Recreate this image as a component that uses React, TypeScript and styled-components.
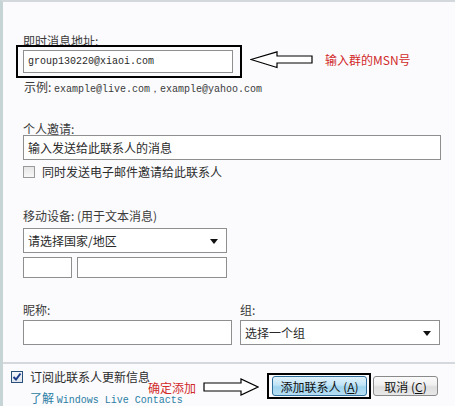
import styled, { createGlobalStyle } from 'styled-components';

const GlobalStyle = createGlobalStyle`
  html, body {
    margin: 0;
    padding: 0;
    background: #fbfbfd;
  }
  body {
    font-family: "Noto Sans CJK SC", "Noto Sans", sans-serif;
    font-size: 12px;
    color: #333;
  }
`;

export default function App() {
  return (
    <>
      <GlobalStyle />
      <Frame>
        <Form>
          <Label>即时消息地址:</Label>
          <TopRow>
            <Highlight>
              <TextBox width={210} height={23}>
                <Mono>group130220@xiaoi.com</Mono>
              </TextBox>
            </Highlight>
            <LeftArrow />
            <TopNote>输入群的MSN号</TopNote>
          </TopRow>
          <Example>
            示例: <Mono>example@live.com，example@yahoo.com</Mono>
          </Example>

          <Label gap={30}>个人邀请:</Label>
          <TextBox width={418} height={25}>
            输入发送给此联系人的消息
          </TextBox>
          <CheckRow top={5}>
            <Box />
            同时发送电子邮件邀请给此联系人
          </CheckRow>

          <Label gap={32}>移动设备: (用于文本消息)</Label>
          <Select width={204} height={25} top={6}>
            请选择国家/地区
            <Caret />
          </Select>
          <PhoneRow>
            <TextBox width={49} height={21} />
            <TextBox width={150} height={21} />
          </PhoneRow>

          <PairRow>
            <Column>
              <Label>昵称:</Label>
              <TextBox width={209} height={25} top={4} />
            </Column>
            <Column>
              <Label>组:</Label>
              <Select width={200} height={25} top={4}>
                选择一个组
                <Caret />
              </Select>
            </Column>
          </PairRow>
        </Form>

        <Divider />

        <Footer>
          <FooterLeft>
            <CheckRow>
              <Box checked>
                <svg width="10" height="10" viewBox="0 0 10 10">
                  <path d="M1.5 5 L4 7.5 L8.5 1.5" fill="none" stroke="#1d3a8a" strokeWidth="2" />
                </svg>
              </Box>
              订阅此联系人更新信息
            </CheckRow>
            <Link>
              了解 <Mono>Windows Live Contacts</Mono>
            </Link>
          </FooterLeft>

          <ConfirmNote>
            <Note>确定添加</Note>
            <RightArrow />
          </ConfirmNote>

          <Buttons>
            <Highlight tight>
              <Button primary>
                添加联系人 (<u>A</u>)
              </Button>
            </Highlight>
            <Button>
              取消 (<u>C</u>)
            </Button>
          </Buttons>
        </Footer>
      </Frame>
    </>
  );
}

function LeftArrow() {
  return (
    <ArrowSvg width="64" height="18" viewBox="0 0 64 18" style={{ margin: '6px 0 0 8px' }}>
      <polygon
        points="1,8.5 27,0.8 27,5 62,5 62,12 27,12 27,16.5"
        fill="#fff"
        stroke="#000"
        strokeWidth="1.2"
      />
    </ArrowSvg>
  );
}

function RightArrow() {
  return (
    <ArrowSvg width="56" height="18" viewBox="0 0 56 18">
      <polygon
        points="1,5 38,5 38,1 55,9 38,17 38,13 1,13"
        fill="#fff"
        stroke="#000"
        strokeWidth="1.2"
      />
    </ArrowSvg>
  );
}

function Caret() {
  return (
    <CaretSvg width="8" height="5" viewBox="0 0 8 5">
      <polygon points="0,0 8,0 4,5" fill="#111" />
    </CaretSvg>
  );
}

const Frame = styled.div`
  width: 455px;
  height: 406px;
  box-sizing: border-box;
  border-top: 2px solid #d3d8dc;
  border-left: 3px solid #c6d4d6;
  background: #fbfbfd;
  display: flex;
  flex-direction: column;
  overflow: hidden;
`;

const Form = styled.div`
  display: flex;
  flex-direction: column;
  align-items: flex-start;
  padding: 33px 14px 0 20px;
  height: 354px;
  flex-shrink: 0;
  box-sizing: border-box;
  & > * {
    flex-shrink: 0;
  }
`;

const Label = styled.div<{ gap?: number }>`
  margin-top: ${(p) => p.gap ?? 0}px;
  line-height: 12px;
  height: 12px;
  color: #3a3a3a;
  white-space: nowrap;
`;

const TopRow = styled.div`
  display: flex;
  align-items: flex-start;
  margin-top: -2px;
  margin-left: -7px;
`;

const Highlight = styled.div<{ tight?: boolean }>`
  border: 2px solid #000;
  padding: ${(p) => (p.tight ? '1px 2px 1px 3px' : '3px 7px 0 5px')};
  height: ${(p) => (p.tight ? 'auto' : '26px')};
  display: flex;
`;

const TextBox = styled.div<{ width: number; height: number; top?: number }>`
  width: ${(p) => p.width}px;
  height: ${(p) => p.height}px;
  margin-top: ${(p) => p.top ?? 0}px;
  flex-shrink: 0;
  box-sizing: border-box;
  border: 1px solid #8f8f8f;
  background: #fff;
  display: flex;
  align-items: center;
  padding-left: 4px;
  color: #2a2a2a;
  white-space: nowrap;
`;

const Select = styled(TextBox)`
  position: relative;
  padding-right: 16px;
`;

const CaretSvg = styled.svg`
  position: absolute;
  right: 8px;
  top: 10px;
`;

const Mono = styled.span`
  font-family: "Liberation Mono", "DejaVu Sans Mono", monospace;
  font-size: 10px;
  line-height: 12px;
`;

const ArrowSvg = styled.svg`
  display: block;
  flex-shrink: 0;
`;

const Note = styled.span`
  color: #d12a2a;
  font-size: 12px;
  white-space: nowrap;
`;

const TopNote = styled(Note)`
  margin: 8px 0 0 11px;
  line-height: 14px;
`;

const Example = styled.div`
  margin-top: 3px;
  margin-left: 1px;
  height: 12px;
  line-height: 12px;
  color: #3a3a3a;
  white-space: nowrap;
`;

const CheckRow = styled.div<{ top?: number }>`
  display: flex;
  align-items: center;
  gap: 7px;
  height: 13px;
  margin-top: ${(p) => p.top ?? 0}px;
  line-height: 13px;
  color: #2c2c2c;
  white-space: nowrap;
`;

const Box = styled.span<{ checked?: boolean }>`
  width: 12px;
  height: 12px;
  box-sizing: border-box;
  border: 1px solid ${(p) => (p.checked ? '#2a4f7a' : '#9a9a9a')};
  background: ${(p) =>
    p.checked ? 'linear-gradient(#f4f7fb, #dfe6ee)' : 'linear-gradient(#e6e6e6, #f8f8f8)'};
  display: flex;
  align-items: center;
  justify-content: center;
  flex-shrink: 0;
`;

const PhoneRow = styled.div`
  display: flex;
  gap: 5px;
  margin-top: 4px;
`;

const PairRow = styled.div`
  display: flex;
  gap: 8px;
  margin-top: 26px;
`;

const Column = styled.div`
  display: flex;
  flex-direction: column;
`;

const Divider = styled.div`
  height: 2px;
  flex-shrink: 0;
  background: #d5d9dd;
  margin-top: 6px;
`;

const Footer = styled.div`
  position: relative;
  flex: 1;
  display: flex;
  align-items: flex-start;
  padding: 5px 17px 0 8px;
`;

const FooterLeft = styled.div`
  display: flex;
  flex-direction: column;
  gap: 8px;
  padding-top: 1px;
`;

const Link = styled.div`
  color: #2b7ea4;
  padding-left: 19px;
  height: 13px;
  line-height: 13px;
  white-space: nowrap;
`;

const ConfirmNote = styled.div`
  position: absolute;
  left: 145px;
  top: 14px;
  display: flex;
  align-items: center;
  gap: 7px;
`;

const Buttons = styled.div`
  margin-left: auto;
  margin-top: 4px;
  display: flex;
  align-items: center;
  gap: 2px;
`;

const Button = styled.div<{ primary?: boolean }>`
  width: ${(p) => (p.primary ? 95 : 65)}px;
  height: 20px;
  box-sizing: border-box;
  border: 1px solid ${(p) => (p.primary ? '#2f6e9b' : '#8a8a8a')};
  border-radius: 3px;
  background: ${(p) =>
    p.primary
      ? 'linear-gradient(#e2f3fc 0%, #bfe3f6 45%, #9fd4ef 55%, #b6def3 100%)'
      : 'linear-gradient(#fbfbfb 0%, #efefef 45%, #dedede 55%, #e8e8e8 100%)'};
  display: flex;
  align-items: center;
  justify-content: center;
  color: #111;
  font-size: 12px;
  white-space: nowrap;
  u {
    text-underline-offset: 1px;
  }
`;
